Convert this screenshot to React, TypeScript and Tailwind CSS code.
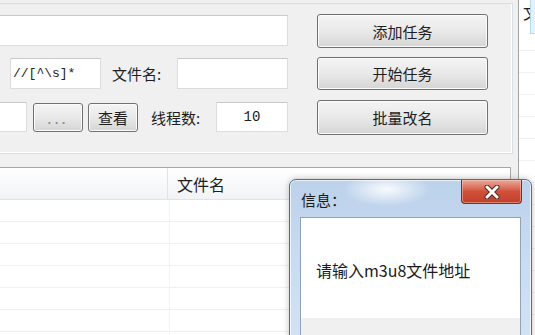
import React from 'react';

const cjk = "font-['Noto_Sans_CJK_SC','Noto_Sans',sans-serif]";
const btn =
  'flex items-center justify-center rounded-[3px] border border-[#707070] bg-gradient-to-b from-[#f4f4f4] via-[#e9e9e9] to-[#d5d5d5] shadow-[inset_0_0_0_1px_#fbfbfb] text-[15px] leading-none text-[#1e1e1e]';
const input = 'bg-white border border-[#dcdcdc] border-t-[#c9c9c9]';

const ListRows: React.FC<{ count: number; split?: boolean }> = ({ count, split }) => (
  <>
    {Array.from({ length: count }).map((_, i) => (
      <div key={i} className="h-[22px] flex border-b border-[#efefef] shrink-0">
        {split && <div className="w-[170px] border-r border-[#f2f2f2]" />}
        <div className="flex-1" />
      </div>
    ))}
  </>
);

const CloseIcon: React.FC = () => (
  <svg width="16" height="14" viewBox="0 0 16 14">
    <path d="M3 2 L13 12 M13 2 L3 12" stroke="#5a2620" strokeWidth="5" strokeLinecap="round" />
    <path d="M3 2 L13 12 M13 2 L3 12" stroke="#ffffff" strokeWidth="3" strokeLinecap="round" />
  </svg>
);

const App: React.FC = () => {
  return (
    <div className={`relative w-[535px] h-[335px] overflow-hidden bg-[#f0f0f0] flex ${cjk}`}>
      {/* main window */}
      <div className="w-[519px] h-full flex flex-col border-r border-[#a3a3a3] shrink-0">
        <div className="pt-[3px]">
          <div className="h-[151px] w-[513px] border-t border-r border-b border-[#d5dfe5] shadow-[inset_-1px_-1px_0_#fff] flex">
            {/* left column */}
            <div className="w-[288px] flex flex-col">
              <div className={`mt-[11px] h-[31px] ${input} border-l-0`} />
              <div className="mt-[12px] h-[31px] flex items-center">
                <div className={`ml-[10px] w-[91px] h-full ${input} flex items-center pl-[2px] font-['Liberation_Mono',monospace] text-[13px] text-[#222]`}>
                  {'//[^\\s]*'}
                </div>
                <div className="ml-[11px] w-[65px] text-[15px] text-[#1e1e1e] leading-none">文件名:</div>
                <div className={`flex-1 h-full ${input}`} />
              </div>
              <div className="mt-[13px] h-[30px] flex items-center">
                <div className={`w-[27px] h-full ${input} border-l-0`} />
                <div className={`ml-[6px] w-[50px] h-[29px] ${btn} text-[#8a8a8a] tracking-[3px] text-[12px]`}>...</div>
                <div className={`ml-[5px] w-[50px] h-[29px] ${btn}`}>查看</div>
                <div className="ml-[13px] w-[65px] text-[15px] text-[#1e1e1e] leading-none">线程数:</div>
                <div className={`w-[72px] h-full ${input} flex items-center justify-center font-['Liberation_Mono',monospace] text-[14px] text-[#222]`}>
                  10
                </div>
              </div>
            </div>
            {/* right column */}
            <div className="ml-[29px] w-[171px] flex flex-col">
              <div className={`mt-[10px] h-[34px] ${btn}`}>添加任务</div>
              <div className={`mt-[9px] h-[33px] ${btn}`}>开始任务</div>
              <div className={`mt-[10px] h-[35px] ${btn}`}>批量改名</div>
            </div>
          </div>
        </div>

        {/* list view */}
        <div className="mt-[13px] w-[511px] flex-1 border-t border-r border-[#a6a6a6] bg-white flex flex-col overflow-hidden">
          <div className="h-[32px] shrink-0 flex bg-gradient-to-b from-white to-[#f2f3f5] border-b border-[#e3e3e3]">
            <div className="w-[168px] border-r border-[#e3e3e3]" />
            <div className="flex-1 pl-[9px] flex items-center text-[16px] text-[#1e1e1e] leading-none">文件名</div>
          </div>
          <ListRows count={7} split />
        </div>
      </div>

      {/* window behind, right edge */}
      <div className="flex-1 h-full bg-white relative overflow-hidden flex flex-col">
        <div className="absolute right-0 top-0 w-[5px] h-[34px] bg-[#e2f1fc] border-l border-b border-[#b5d9f3]" />
        <div className="h-[29px] shrink-0 pl-[4px] pt-[4px] text-[16px] leading-none text-[#1e1e1e] whitespace-nowrap">文</div>
        <ListRows count={14} />
      </div>

      {/* message box */}
      <div className="absolute left-[289px] top-[179px] w-[243px] h-[170px] rounded-t-[7px] border border-[#5b6b80] bg-gradient-to-b from-[#bcd2eb] via-[#c9dcf1] to-[#d3e3f4] shadow-[inset_0_0_0_1px_rgba(255,255,255,0.7),0_0_6px_rgba(0,0,0,0.25)] flex flex-col">
        <div className="relative h-[37px] shrink-0 bg-[radial-gradient(ellipse_18%_45%_at_40%_25%,rgba(255,255,255,0.9),rgba(255,255,255,0)_100%)]">
          <div className="pl-[11px] pt-[12px] text-[15px] leading-none text-[#1a1a1a]">信息：</div>
          <div className="absolute right-[9px] top-0 w-[61px] h-[24px] rounded-b-[4px] border border-t-0 border-[#7a3127] bg-gradient-to-b from-[#e9aa9c] via-[#d2503a] to-[#c0402b] shadow-[inset_0_0_0_1px_rgba(255,210,200,0.45)] flex items-center justify-center">
            <CloseIcon />
          </div>
        </div>
        <div className="mx-[10px] flex-1 border border-[#8fa3ba] bg-white flex flex-col">
          <div className="h-[100px] pl-[15px] pt-[41px] text-[16px] leading-[22px] text-[#1a1a1a]">请输入m3u8文件地址</div>
          <div className="flex-1 bg-[#f0f0f0]" />
        </div>
      </div>
    </div>
  );
};

export default App;
